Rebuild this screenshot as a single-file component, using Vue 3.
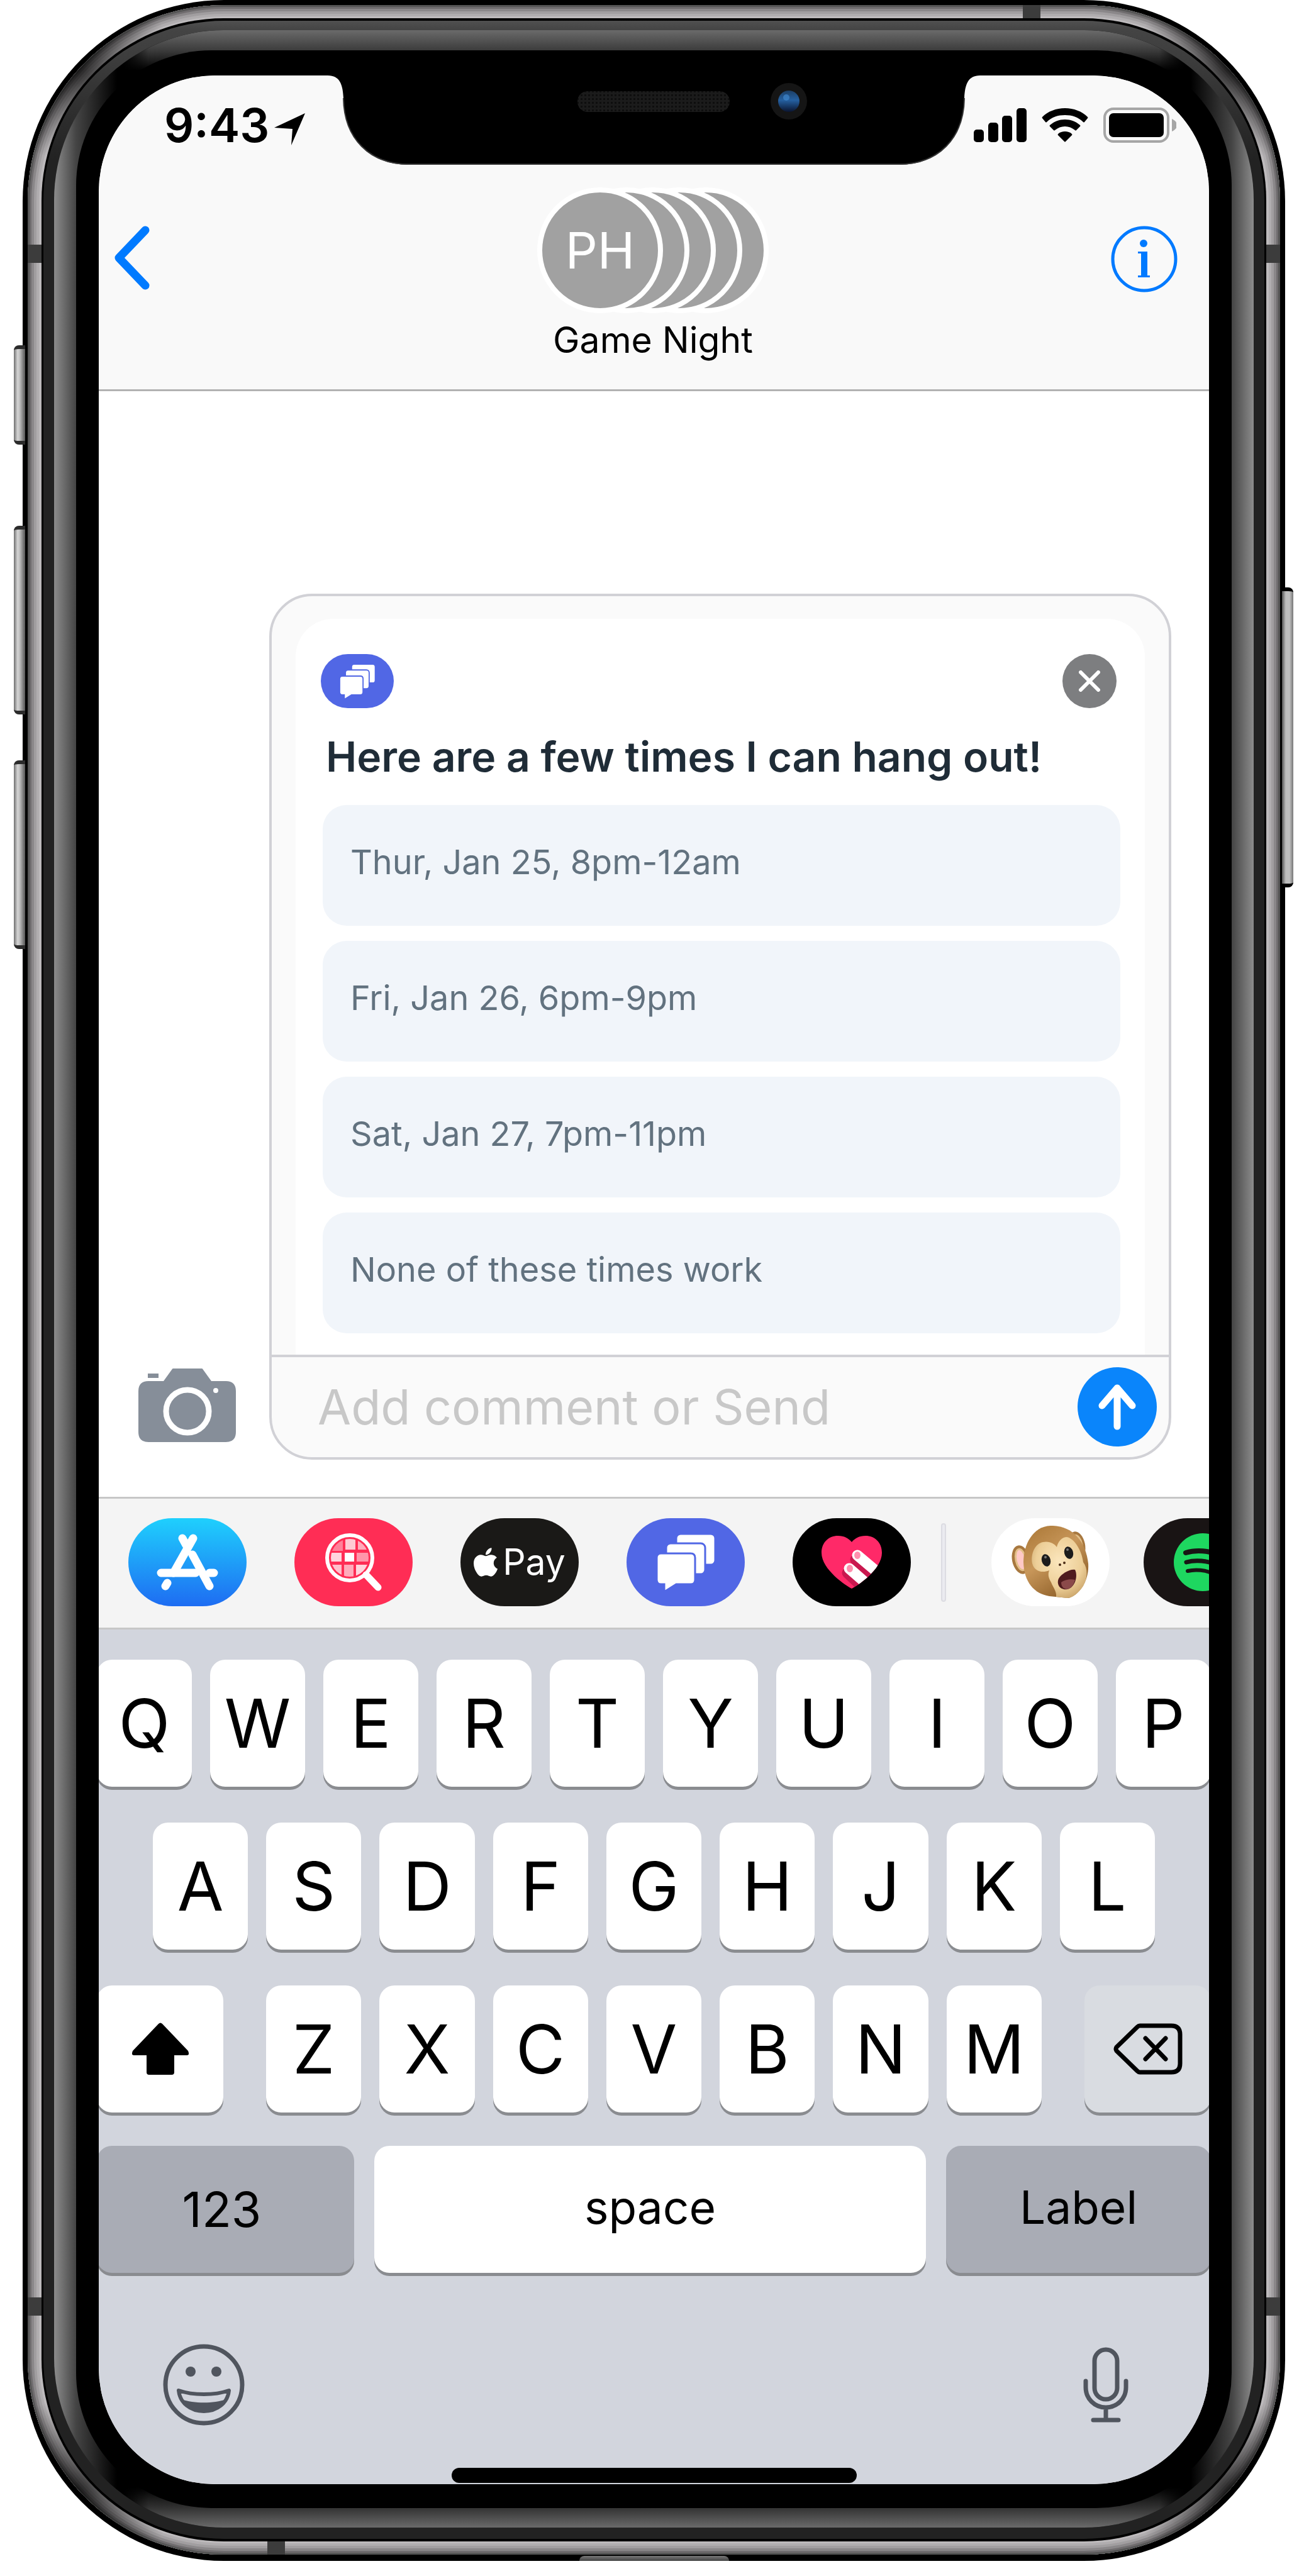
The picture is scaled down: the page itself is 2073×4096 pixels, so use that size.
<script setup>
import { ref } from 'vue'

const times = [
  'Thur, Jan 25, 8pm-12am',
  'Fri, Jan 26, 6pm-9pm',
  'Sat, Jan 27, 7pm-11pm',
  'None of these times work',
]
const topRow = 'QWERTYUIOP'.split('')
const homeRow = 'ASDFGHJKL'.split('')
const lowerRow = 'ZXCVBNM'.split('')
const comment = ref('')
</script>

<template>
  <main class="page">
    <div class="phone">
      <span class="side mute"></span>
      <span class="side up"></span>
      <span class="side down"></span>
      <span class="side power"></span>
      <span class="port"></span>
      <div class="metal">
        <span class="band band-tl"></span>
        <span class="band band-tr"></span>
        <span class="band band-bl"></span>
        <span class="band band-br"></span>
        <span class="band-v band-top"></span>
        <span class="band-v band-bottom"></span>
        <div class="seam">
          <div class="rim">
            <div class="glass">
              <div class="bezel">
                <div class="screen">
                  <div class="notch">
                    <svg width="1037" height="142" viewBox="0 0 1037 142" aria-hidden="true">
                      <defs>
                        <pattern id="mesh" width="6" height="6" patternUnits="userSpaceOnUse">
                          <rect width="6" height="6" fill="#1b1b1b" />
                          <rect width="3" height="3" fill="#0e0e0e" />
                        </pattern>
                        <linearGradient id="lens" x1="0" y1="0" x2="0" y2="1">
                          <stop offset="0" stop-color="#1c3f66" />
                          <stop offset=".45" stop-color="#2560a0" />
                          <stop offset="1" stop-color="#0a1430" />
                        </linearGradient>
                      </defs>
                      <path d="M0 0C19 0 24 14 25 36C26 100 66 142 129 142H908C971 142 1011 100 1012 36C1013 14 1018 0 1037 0Z" fill="#000" />
                      <path d="M25 36C26 100 66 141 129 141H908C971 141 1011 100 1012 36" fill="none" stroke="#333" stroke-width="2" />
                      <rect x="397" y="25" width="242" height="33" rx="16" fill="url(#mesh)" />
                      <circle cx="733" cy="41" r="29" fill="#151515" />
                      <circle cx="733" cy="41" r="17" fill="url(#lens)" />
                      <circle cx="729" cy="35" r="5" fill="#3f86cc" opacity=".7" />
                    </svg>
                  </div>

                  <header class="top">
                    <div class="status">
                      <div class="clock">
                        <time>9:43</time>
                        <svg width="49" height="51" viewBox="0 0 49 51" aria-hidden="true"><path d="M49 0L27 51L29 25L0 23Z" /></svg>
                      </div>
                      <div class="signals">
                        <svg width="84" height="54" viewBox="0 0 84 54" aria-hidden="true">
                          <rect x="0" y="34" width="16" height="20" rx="5" />
                          <rect x="23" y="23" width="16" height="31" rx="5" />
                          <rect x="45" y="12" width="16" height="42" rx="5" />
                          <rect x="68" y="0" width="16" height="54" rx="5" />
                        </svg>
                        <svg width="74" height="54" viewBox="0 0 74 54" aria-hidden="true">
                          <path d="M37 0C51 0 64 5 73 14Q74 15 73 16L68 22Q67 23 66 22C58 14 48 11 37 11S16 14 8 22Q7 23 6 22L1 16Q0 15 1 14C10 5 23 0 37 0Z" />
                          <path d="M37 18C46 18 54 21 61 27Q62 28 61 29L55 35Q54 36 53 35C48 31 43 29 37 29S26 31 21 35Q20 36 19 35L13 29Q12 28 13 27C20 21 28 18 37 18Z" />
                          <path d="M37 37C41 37 45 38 48 41Q49 42 48 43L38 53Q37 54 36 53L26 43Q25 42 26 41C29 38 33 37 37 37Z" />
                        </svg>
                        <svg width="116" height="56" viewBox="0 0 116 56" aria-hidden="true">
                          <rect x="2" y="2" width="101" height="52" rx="14" fill="none" stroke="#a6a6a6" stroke-width="4" />
                          <rect x="9" y="9" width="87" height="38" rx="7" />
                          <path d="M109 18C115 21 117 24 117 28S115 35 109 38Z" fill="#a6a6a6" />
                        </svg>
                      </div>
                    </div>
                    <nav class="nav">
                      <button class="bare" type="button" aria-label="Back">
                        <svg width="58" height="102" viewBox="0 0 58 102"><path d="M51 7L9 51L51 95" fill="none" stroke="#007aff" stroke-width="13" stroke-linecap="round" stroke-linejoin="round" /></svg>
                      </button>
                      <div class="group">
                        <div class="avatars">
                          <span class="avatar">PH</span>
                          <span v-for="n in 4" :key="n" class="avatar"></span>
                        </div>
                        <h1>Game Night</h1>
                      </div>
                      <button class="bare" type="button" aria-label="Details">
                        <svg width="106" height="106" viewBox="0 0 106 106">
                          <circle cx="53" cy="53" r="50" fill="none" stroke="#007aff" stroke-width="5" />
                          <circle cx="52" cy="28" r="6" fill="#007aff" />
                          <path d="M43 41H58V79H62V82H43V79H48V44H43Z" fill="#007aff" />
                        </svg>
                      </button>
                    </nav>
                  </header>

                  <section class="compose">
                    <button class="bare camera" type="button" aria-label="Camera">
                      <svg width="155" height="117" viewBox="0 0 155 117">
                        <path d="M15 8H32V15H15ZM55 0H101Q102 0 103 2L116 20H139Q155 20 155 36V101Q155 117 139 117H16Q0 117 0 101V36Q0 20 16 20H40L53 2Q54 0 55 0Z" fill="#868e99" />
                        <circle cx="78" cy="68" r="34" fill="none" stroke="#fff" stroke-width="9" />
                        <circle cx="123" cy="35" r="4" fill="#fff" />
                      </svg>
                    </button>
                    <div class="card">
                      <div class="poll">
                        <div class="poll-head">
                          <span class="badge">
                            <svg width="56" height="55" viewBox="0 0 92 90" aria-hidden="true">
                              <g fill="#fff" stroke="#5167e5" stroke-width="3">
                                <rect x="31" y="0" width="62" height="49" rx="7" />
                                <rect x="15" y="15" width="62" height="49" rx="7" />
                                <path d="M7 31H54Q61 31 61 38V73Q61 80 54 80H31L12 92V80H7Q0 80 0 73V38Q0 31 7 31Z" />
                              </g>
                            </svg>
                          </span>
                          <button class="close" type="button" aria-label="Remove">
                            <svg width="34" height="34" viewBox="0 0 34 34"><path d="M3 3L31 31M31 3L3 31" stroke="#fff" stroke-width="6" stroke-linecap="round" /></svg>
                          </button>
                        </div>
                        <h2>Here are a few times I can hang out!</h2>
                        <div class="options">
                          <button v-for="t in times" :key="t" class="option" type="button">{{ t }}</button>
                        </div>
                      </div>
                      <form class="reply" @submit.prevent>
                        <input v-model="comment" type="text" placeholder="Add comment or Send" aria-label="Comment" />
                        <button class="send" type="submit" aria-label="Send">
                          <svg width="60" height="74" viewBox="0 0 60 74"><path d="M30 7V68M6 35L30 7L54 35" fill="none" stroke="#fff" stroke-width="11" stroke-linecap="round" stroke-linejoin="round" /></svg>
                        </button>
                      </form>
                    </div>
                  </section>

                  <section class="apps" aria-label="Apps">
                    <div class="favorites">
                      <button class="app store" type="button" aria-label="App Store">
                        <svg width="98" height="90" viewBox="0 0 98 90">
                          <g fill="none" stroke="#fff" stroke-width="13" stroke-linecap="round">
                            <path d="M58 7L27 62M17 78L14 83M41 7L47 18M57 33L84 83" />
                            <path d="M7 62H62M84 62H91" />
                          </g>
                        </svg>
                      </button>
                      <button class="app images" type="button" aria-label="Images">
                        <svg width="90" height="92" viewBox="0 0 90 92">
                          <defs><clipPath id="globe"><circle cx="39" cy="39" r="30" /></clipPath></defs>
                          <g clip-path="url(#globe)" fill="#fff">
                            <rect x="8" y="8" width="20" height="20" opacity=".4" />
                            <rect x="32" y="8" width="16" height="18" opacity=".75" />
                            <rect x="52" y="8" width="18" height="18" opacity=".6" />
                            <rect x="8" y="31" width="18" height="14" opacity=".8" />
                            <rect x="31" y="31" width="15" height="14" />
                            <rect x="50" y="31" width="20" height="14" opacity=".5" />
                            <rect x="8" y="50" width="18" height="20" opacity=".7" />
                            <rect x="30" y="50" width="15" height="20" opacity=".6" />
                            <rect x="49" y="50" width="20" height="20" opacity=".8" />
                          </g>
                          <circle cx="39" cy="39" r="36" fill="none" stroke="#fff" stroke-width="6" />
                          <path d="M65 66L84 86" stroke="#fff" stroke-width="11" stroke-linecap="round" />
                        </svg>
                      </button>
                      <button class="app pay" type="button">
                        <svg width="38" height="46" viewBox="4 32 376 448" aria-hidden="true"><path fill="#fff" d="M318.700 268.700c-.2-36.700 16.400-64.400 50-84.800-18.800-26.900-47.200-41.700-84.700-44.600-35.500-2.800-74.300 20.700-88.500 20.700-15 0-49.400-19.700-76.400-19.700C63.300 141.200 4 184.800 4 273.500q0 39.300 14.400 81.200c12.800 36.700 59 126.700 107.200 125.200 25.200-.6 43-17.900 75.800-17.900 31.800 0 48.300 17.900 76.400 17.900 48.600-.7 90.400-82.500 102.600-119.300-65.200-30.700-61.700-90-61.700-91.900zm-56.600-164.200c27.300-32.400 24.800-61.900 24-72.500-24.100 1.400-52 16.400-67.900 34.900-17.500 19.800-27.800 44.300-25.600 71.900 26.100 2 49.900-11.400 69.500-34.300z" /></svg>
                        <span>Pay</span>
                      </button>
                      <button class="app polls" type="button" aria-label="Polls">
                        <svg width="92" height="90" viewBox="0 0 92 90">
                          <g fill="#fff" stroke="#5167e5" stroke-width="3">
                            <rect x="31" y="0" width="62" height="49" rx="7" />
                            <rect x="15" y="15" width="62" height="49" rx="7" />
                            <path d="M7 31H54Q61 31 61 38V73Q61 80 54 80H31L12 92V80H7Q0 80 0 73V38Q0 31 7 31Z" />
                          </g>
                        </svg>
                      </button>
                      <button class="app touch" type="button" aria-label="Digital Touch">
                        <svg width="96" height="85" viewBox="0 0 96 85">
                          <defs><clipPath id="heart"><path d="M48 84C40 80 0 54 0 27C0 10 12 0 26 0C36 0 43 4 48 10C53 4 60 0 70 0C84 0 96 10 96 27C96 54 56 80 48 84Z" /></clipPath></defs>
                          <g clip-path="url(#heart)">
                            <rect width="96" height="85" fill="#ff2968" />
                            <path d="M57 31L96 66M44 52L76 82" transform="translate(-3 7)" stroke="#c9184f" stroke-width="17" stroke-linecap="round" />
                            <path d="M57 31L96 64M44 52L76 80" stroke="#fff" stroke-width="17" stroke-linecap="round" />
                            <ellipse cx="57" cy="31" rx="5" ry="6" fill="#ff8fae" />
                            <ellipse cx="45" cy="52" rx="5" ry="6" fill="#ff8fae" />
                          </g>
                        </svg>
                      </button>
                    </div>
                    <span class="divider"></span>
                    <div class="recents">
                      <button class="app animoji" type="button" aria-label="Animoji">
                        <svg width="124" height="116" viewBox="0 0 124 116">
                          <defs>
                            <linearGradient id="fur" x1="0" y1="0" x2=".6" y2="1">
                              <stop offset="0" stop-color="#a97635" />
                              <stop offset=".5" stop-color="#c8975a" />
                              <stop offset="1" stop-color="#8f6029" />
                            </linearGradient>
                            <radialGradient id="face" cx=".5" cy=".4" r=".7">
                              <stop offset="0" stop-color="#fbe6bd" />
                              <stop offset=".6" stop-color="#edcf98" />
                              <stop offset="1" stop-color="#c29a5e" />
                            </radialGradient>
                          </defs>
                          <ellipse cx="15" cy="54" rx="14" ry="23" transform="rotate(-12 15 54)" fill="#a8783f" />
                          <ellipse cx="15" cy="54" rx="8" ry="17" transform="rotate(-12 15 54)" fill="#ffc9c6" stroke="#e3c08a" stroke-width="3" />
                          <ellipse cx="104" cy="31" rx="13" ry="22" transform="rotate(-12 104 31)" fill="#a8783f" />
                          <ellipse cx="104" cy="31" rx="8" ry="16" transform="rotate(-12 104 31)" fill="#ffc9c6" stroke="#e3c08a" stroke-width="3" />
                          <path d="M62 0C34 1 19 30 19 58C20 90 36 108 60 112L90 115C108 111 124 86 122 60C118 24 96 -1 62 0Z" fill="url(#fur)" />
                          <path d="M50 26C60 24 68 28 72 34C74 25 80 18 88 18C100 20 112 40 114 58C122 68 121 84 114 96C106 108 96 115 88 115L71 113C72 104 66 98 63 90C58 82 58 76 60 71C48 76 36 72 33 60C30 44 38 28 50 26Z" fill="url(#face)" />
                          <ellipse cx="55" cy="55" rx="7" ry="10" transform="rotate(-15 55 55)" fill="#1c1c1c" />
                          <ellipse cx="91" cy="43" rx="7" ry="10" transform="rotate(-15 91 43)" fill="#1c1c1c" />
                          <circle cx="54" cy="50" r="2" fill="#777" />
                          <circle cx="89" cy="38" r="2" fill="#777" />
                          <circle cx="77" cy="62" r="2" fill="#4a2c16" />
                          <circle cx="84" cy="59" r="2" fill="#4a2c16" />
                          <path d="M101 70C106 80 101 98 89 101C77 103 71 93 75 84C79 76 94 68 101 70Z" fill="#4f1b1e" />
                          <path d="M79 90C84 86 94 84 101 86C99 94 95 99 89 101C83 101 79 97 79 90Z" fill="#8b4a4a" />
                        </svg>
                      </button>
                      <button class="app music" type="button" aria-label="Spotify">
                        <svg width="92" height="92" viewBox="0 0 92 92">
                          <circle cx="46" cy="46" r="46" fill="#1ed760" />
                          <g fill="none" stroke="#191414" stroke-linecap="round">
                            <path d="M19 31C35 26 57 27 74 36" stroke-width="8" />
                            <path d="M20 46C34 42 54 43 69 51" stroke-width="7" />
                            <path d="M22 60C34 57 51 58 64 65" stroke-width="6" />
                          </g>
                        </svg>
                      </button>
                    </div>
                  </section>

                  <section class="keyboard" aria-label="Keyboard">
                    <div class="rows">
                      <div class="row">
                        <button v-for="k in topRow" :key="k" class="key" type="button">{{ k }}</button>
                      </div>
                      <div class="row middle">
                        <button v-for="k in homeRow" :key="k" class="key" type="button">{{ k }}</button>
                      </div>
                      <div class="row lower">
                        <button class="key edge" type="button" aria-label="Shift">
                          <svg width="92" height="84" viewBox="0 0 92 84"><path d="M43 2Q46 -1 49 2L90 45Q93 52 88 52H68V79Q68 83 64 83H28Q24 83 24 79V52H4Q-1 52 2 45Z" /></svg>
                        </button>
                        <div class="letters">
                          <button v-for="k in lowerRow" :key="k" class="key" type="button">{{ k }}</button>
                        </div>
                        <button class="key edge erase" type="button" aria-label="Delete">
                          <svg width="110" height="82" viewBox="0 0 110 82" fill="none" stroke="#000" stroke-width="7" stroke-linecap="round" stroke-linejoin="round">
                            <path d="M42 4H92Q106 4 106 18V64Q106 78 92 78H42Q40 78 38 76L5 44Q3 41 5 38L38 6Q40 4 42 4Z" />
                            <path d="M51 24L83 57M83 24L51 57" />
                          </svg>
                        </button>
                      </div>
                    </div>
                    <div class="row last">
                      <button class="key word numbers" type="button">123</button>
                      <button class="key word space" type="button">space</button>
                      <button class="key word label" type="button">Label</button>
                    </div>
                    <div class="tools">
                      <button class="bare" type="button" aria-label="Emoji">
                        <svg width="130" height="130" viewBox="0 0 130 130">
                          <circle cx="65" cy="65" r="61" fill="none" stroke="#50555e" stroke-width="7" />
                          <ellipse cx="44" cy="44" rx="8" ry="8" fill="#50555e" />
                          <ellipse cx="85" cy="44" rx="8" ry="8" fill="#50555e" />
                          <path d="M25 74C48 82 82 82 105 74C103 94 86 107 65 107S27 94 25 74Z" fill="none" stroke="#50555e" stroke-width="6" stroke-linejoin="round" />
                          <path d="M29 88C50 95 80 95 101 88C95 102 82 108 65 108S35 102 29 88Z" fill="#50555e" />
                        </svg>
                      </button>
                      <button class="bare" type="button" aria-label="Dictate">
                        <svg width="72" height="120" viewBox="0 0 72 120" fill="none" stroke="#50555e" stroke-width="7" stroke-linecap="round">
                          <rect x="18" y="4" width="36" height="79" rx="18" />
                          <path d="M4 54V64C4 82 18 96 36 96S68 82 68 64V54M36 97V115M16 116H56" />
                        </svg>
                      </button>
                    </div>
                    <div class="home"></div>
                  </section>
                </div>
              </div>
            </div>
          </div>
        </div>
      </div>
    </div>
  </main>
</template>

<style>
body {
  margin: 0;
  background: #fff;
}
</style>

<style scoped>
* {
  box-sizing: border-box;
}
.page {
  padding: 0 30px 24px 36px;
  font-family: Inter, "Liberation Sans", sans-serif;
  color: #000;
}
button,
input {
  font: inherit;
  color: inherit;
  border: 0;
  margin: 0;
  padding: 0;
}
svg {
  display: block;
  flex: none;
}
.bare {
  background: none;
}

/* Device body */
.phone {
  position: relative;
  padding: 8px 8px 10px;
  background: #000;
  border-radius: 320px;
}
.side {
  position: absolute;
  left: -14px;
  width: 18px;
  border: solid #2b2b2b;
  border-width: 6px 0;
  border-radius: 8px 0 0 8px;
  background: linear-gradient(to right, #6f6f6f, #d6d6d6 6px, #b8b8b8 10px, #555);
}
.mute {
  top: 549px;
  height: 158px;
}
.up {
  top: 836px;
  height: 300px;
}
.down {
  top: 1209px;
  height: 300px;
}
.power {
  top: 934px;
  left: auto;
  right: -13px;
  height: 477px;
  border-color: #000;
  border-radius: 0 8px 8px 0;
  background: linear-gradient(to left, #777, #bfbfbf 6px, #bdbdbd 12px, #555);
}
.port {
  position: absolute;
  left: 0;
  right: 0;
  bottom: 0;
  width: 238px;
  height: 8px;
  margin: 0 auto;
  border-radius: 8px 8px 0 0;
  background: linear-gradient(#777, #444);
}
.metal {
  position: relative;
  padding: 21px 22px;
  border-radius: 312px;
  background: #bdbabc;
  box-shadow: inset 0 0 0 3px #555, inset 0 0 0 6px #6f6c6e, inset 0 0 0 10px #8a8789, inset 0 0 0 14px #a19ea0, inset 0 0 0 18px #b0adaf;
}
.metal::before {
  content: "";
  position: absolute;
  inset: 0;
  border-radius: inherit;
  background:
    radial-gradient(circle at 80px 100px, rgba(0, 0, 0, 0.7), transparent 150px),
    radial-gradient(circle at calc(100% - 80px) 100px, rgba(0, 0, 0, 0.7), transparent 150px),
    radial-gradient(circle at 80px calc(100% - 100px), rgba(0, 0, 0, 0.7), transparent 150px),
    radial-gradient(circle at calc(100% - 80px) calc(100% - 100px), rgba(0, 0, 0, 0.7), transparent 150px);
}
.band,
.band-v {
  position: absolute;
  background: #3c3c3c;
}
.band {
  width: 22px;
  height: 29px;
}
.band-v {
  width: 28px;
  height: 21px;
}
.band-tl {
  top: 381px;
  left: 0;
}
.band-tr {
  top: 381px;
  right: 0;
}
.band-bl {
  bottom: 380px;
  left: 0;
}
.band-br {
  bottom: 380px;
  right: 0;
}
.band-top {
  top: 0;
  right: 381px;
}
.band-bottom {
  bottom: 0;
  left: 381px;
}
.seam {
  position: relative;
  padding: 4px 3px;
  border-radius: 290px;
  background: #000;
}
.rim {
  padding: 15px 17px 18px;
  border-radius: 287px;
  background: linear-gradient(#505050, #444 15px, #222 220px);
}
.glass {
  position: relative;
  padding: 32px 35px 31px;
  border-radius: 270px;
  overflow: hidden;
  background: linear-gradient(to right, #8c8c8c, #444 35px, #000 100px, #000 calc(100% - 100px), #444 calc(100% - 35px), #8c8c8c);
}
.glass::before {
  content: "";
  position: absolute;
  inset: 0;
  background: linear-gradient(#6a6a6a, #3c3c3c 32px, #000 64px, #000 calc(100% - 64px), #333 calc(100% - 31px), #6a6a6a);
  mask-image: linear-gradient(to right, transparent 110px, #000 150px, #000 calc(100% - 150px), transparent calc(100% - 110px));
}
.bezel {
  position: relative;
  padding: 40px 36px 38px;
  border-radius: 215px;
  background: #000;
}
.screen {
  position: relative;
  overflow: hidden;
  border-radius: 185px;
  background: #fff;
}
.notch {
  position: absolute;
  top: 0;
  left: 0;
  right: 0;
  display: flex;
  justify-content: center;
}

/* Status bar and conversation header */
.top {
  background: #f9f9f9;
  border-bottom: 3px solid #b2b2b2;
}
.status {
  display: flex;
  justify-content: space-between;
  align-items: center;
  height: 158px;
  padding: 0 52px 0 104px;
}
.clock {
  display: flex;
  align-items: center;
  gap: 8px;
  font-size: 74px;
  line-height: 84px;
  font-weight: 600;
}
.clock svg {
  margin-top: 12px;
}
.signals {
  display: flex;
  align-items: center;
  gap: 24px;
}
.nav {
  display: flex;
  justify-content: space-between;
  align-items: flex-start;
  padding: 20px 50px 42px 23px;
}
.nav > .bare {
  flex: 1;
  display: flex;
  margin-top: 61px;
}
.nav > .bare:last-child {
  justify-content: flex-end;
}
.group {
  display: flex;
  flex-direction: column;
  align-items: center;
  gap: 7px;
  margin-left: 24px;
}
.avatars {
  display: flex;
}
.avatar {
  position: relative;
  z-index: 1;
  display: flex;
  align-items: center;
  justify-content: center;
  width: 200px;
  height: 200px;
  margin-left: -158px;
  border: 8px solid #fff;
  border-radius: 50%;
  background: #a1a1a1;
  color: #fff;
  font-size: 80px;
  line-height: 96px;
}
.avatar:nth-child(1) {
  z-index: 5;
  margin-left: 0;
}
.avatar:nth-child(2) {
  z-index: 4;
}
.avatar:nth-child(3) {
  z-index: 3;
}
.avatar:nth-child(4) {
  z-index: 2;
}
h1 {
  margin: 0;
  font-size: 57px;
  line-height: 72px;
  font-weight: 400;
}

/* Message draft */
.compose {
  display: flex;
  align-items: flex-end;
  gap: 53px;
  padding: 322px 60px 59px 63px;
}
.camera {
  margin-bottom: 28px;
}
.card {
  flex: 1;
  border: 4px solid #d1d1d6;
  border-radius: 68px;
  background: #fafafa;
  overflow: hidden;
}
.poll {
  margin: 36px 38px 0;
  padding: 56px 39px 34px 43px;
  border-radius: 60px 60px 0 0;
  background: #fff;
}
.poll-head {
  display: flex;
  justify-content: space-between;
  padding-right: 6px;
}
.badge,
.close {
  display: flex;
  align-items: center;
  justify-content: center;
  width: 86px;
  height: 86px;
  border-radius: 43px;
  background: #7d7e80;
}
.badge {
  width: 116px;
  margin-left: -3px;
  background: #5167e5;
}
h2 {
  margin: 37px 0 37px 5px;
  font-size: 66px;
  line-height: 80px;
  font-weight: 600;
  color: #1f2c37;
  white-space: nowrap;
}
.options {
  display: flex;
  flex-direction: column;
  gap: 24px;
}
.option {
  height: 192px;
  padding: 0 44px 12px;
  border-radius: 38px;
  background: #f1f5fa;
  color: #62727f;
  font-size: 54px;
  text-align: left;
}
.reply {
  display: flex;
  align-items: center;
  height: 163px;
  padding: 0 19px 2px 73px;
  border-top: 4px solid #d1d1d6;
}
.reply input {
  flex: 1;
  min-width: 0;
  height: 120px;
  outline: 0;
  background: none;
  font-size: 77px;
}
.reply input::placeholder {
  color: #c8c8c8;
  opacity: 1;
}
.send {
  display: flex;
  align-items: center;
  justify-content: center;
  width: 126px;
  height: 126px;
  border-radius: 50%;
  background: #0a85fb;
}

/* App strip */
.apps {
  display: flex;
  align-items: center;
  padding: 31px 0 34px 47px;
  border: solid #c7c7c7;
  border-width: 3px 0;
  background: #f4f4f4;
  overflow: hidden;
}
.favorites {
  display: flex;
  gap: 76px;
}
.recents {
  display: flex;
  gap: 54px;
}
.app {
  flex: none;
  display: flex;
  align-items: center;
  justify-content: center;
  width: 188px;
  height: 140px;
  border-radius: 70px;
}
.store {
  background: linear-gradient(#1fd0fd, #1e6cf2);
}
.images {
  background: #ff2d55;
}
.pay {
  gap: 8px;
  background: #1a1917;
  color: #fff;
  font-size: 57px;
  line-height: 64px;
}
.polls {
  background: #5167e5;
}
.touch {
  background: #000;
}
.animoji {
  background: #fff;
}
.music {
  background: #191414;
}
.divider {
  flex: none;
  width: 8px;
  height: 125px;
  margin: 0 72px 0 48px;
  border: 2px solid #dcdce2;
  border-radius: 4px;
  background: #ebebf0;
}

/* Keyboard */
.keyboard {
  padding: 48px 0 2px;
  background: #d2d5dd;
}
.rows {
  display: flex;
  flex-direction: column;
  gap: 57px;
  margin: 0 -3px;
}
.row,
.letters {
  display: flex;
  gap: 29px;
}
.middle {
  padding: 0 89px;
}
.lower {
  gap: 68px;
}
.last {
  gap: 32px;
  margin: 53px -3px 0;
}
.letters {
  flex: 1;
}
.key {
  flex: 1;
  display: flex;
  align-items: center;
  justify-content: center;
  min-width: 0;
  height: 202px;
  border-radius: 24px;
  background: #fff;
  box-shadow: 0 5px 0 #8a8c90;
  font-size: 107px;
}
.edge {
  flex: none;
  width: 201px;
}
.erase {
  background: #d9dce1;
}
.word {
  font-size: 73px;
  padding-bottom: 8px;
}
.numbers,
.label {
  flex: none;
  width: 409px;
  background: #a9acb5;
}
.numbers {
  font-size: 77px;
  padding: 0 12px 0 0;
}
.label {
  width: 421px;
}
.tools {
  display: flex;
  align-items: center;
  justify-content: space-between;
  padding: 113px 128px 67px 102px;
}
.home {
  width: 644px;
  height: 24px;
  margin: 0 auto;
  border-radius: 12px;
  background: #000;
}
</style>
